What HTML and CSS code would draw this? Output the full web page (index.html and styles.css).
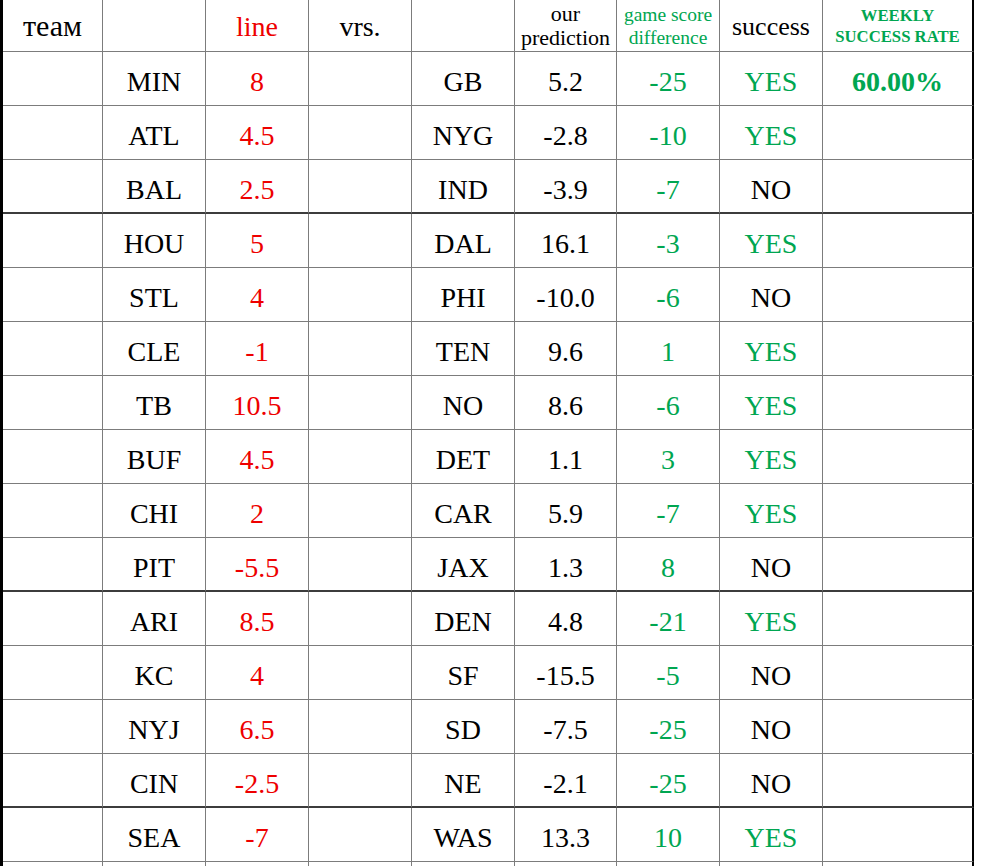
FILE: index.html
```html
<!DOCTYPE html>
<html>
<head>
<meta charset="utf-8">
<link rel="stylesheet" href="styles.css">
</head>
<body>
<div class="sheet">
  <div class="row head">
    <div class="c h-team">теам</div>
    <div class="c"></div>
    <div class="c h-line red">line</div>
    <div class="c h-vrs">vrs.</div>
    <div class="c"></div>
    <div class="c h-pred">our<br>prediction</div>
    <div class="c h-diff green">game score<br>difference</div>
    <div class="c h-succ">success</div>
    <div class="c h-rate green">WEEKLY<br>SUCCESS RATE</div>
  </div>

  <div class="row"><div class="c"></div><div class="c">MIN</div><div class="c red">8</div><div class="c"></div><div class="c">GB</div><div class="c">5.2</div><div class="c green">-25</div><div class="c green">YES</div><div class="c rate green">60.00%</div></div>
  <div class="row"><div class="c"></div><div class="c">ATL</div><div class="c red">4.5</div><div class="c"></div><div class="c">NYG</div><div class="c">-2.8</div><div class="c green">-10</div><div class="c green">YES</div><div class="c"></div></div>
  <div class="row end"><div class="c"></div><div class="c">BAL</div><div class="c red">2.5</div><div class="c"></div><div class="c">IND</div><div class="c">-3.9</div><div class="c green">-7</div><div class="c">NO</div><div class="c"></div></div>

  <div class="row"><div class="c"></div><div class="c">HOU</div><div class="c red">5</div><div class="c"></div><div class="c">DAL</div><div class="c">16.1</div><div class="c green">-3</div><div class="c green">YES</div><div class="c"></div></div>
  <div class="row"><div class="c"></div><div class="c">STL</div><div class="c red">4</div><div class="c"></div><div class="c">PHI</div><div class="c">-10.0</div><div class="c green">-6</div><div class="c">NO</div><div class="c"></div></div>
  <div class="row"><div class="c"></div><div class="c">CLE</div><div class="c red">-1</div><div class="c"></div><div class="c">TEN</div><div class="c">9.6</div><div class="c green">1</div><div class="c green">YES</div><div class="c"></div></div>
  <div class="row"><div class="c"></div><div class="c">TB</div><div class="c red">10.5</div><div class="c"></div><div class="c">NO</div><div class="c">8.6</div><div class="c green">-6</div><div class="c green">YES</div><div class="c"></div></div>
  <div class="row"><div class="c"></div><div class="c">BUF</div><div class="c red">4.5</div><div class="c"></div><div class="c">DET</div><div class="c">1.1</div><div class="c green">3</div><div class="c green">YES</div><div class="c"></div></div>
  <div class="row"><div class="c"></div><div class="c">CHI</div><div class="c red">2</div><div class="c"></div><div class="c">CAR</div><div class="c">5.9</div><div class="c green">-7</div><div class="c green">YES</div><div class="c"></div></div>
  <div class="row end"><div class="c"></div><div class="c">PIT</div><div class="c red">-5.5</div><div class="c"></div><div class="c">JAX</div><div class="c">1.3</div><div class="c green">8</div><div class="c">NO</div><div class="c"></div></div>

  <div class="row"><div class="c"></div><div class="c">ARI</div><div class="c red">8.5</div><div class="c"></div><div class="c">DEN</div><div class="c">4.8</div><div class="c green">-21</div><div class="c green">YES</div><div class="c"></div></div>
  <div class="row"><div class="c"></div><div class="c">KC</div><div class="c red">4</div><div class="c"></div><div class="c">SF</div><div class="c">-15.5</div><div class="c green">-5</div><div class="c">NO</div><div class="c"></div></div>
  <div class="row"><div class="c"></div><div class="c">NYJ</div><div class="c red">6.5</div><div class="c"></div><div class="c">SD</div><div class="c">-7.5</div><div class="c green">-25</div><div class="c">NO</div><div class="c"></div></div>
  <div class="row end"><div class="c"></div><div class="c">CIN</div><div class="c red">-2.5</div><div class="c"></div><div class="c">NE</div><div class="c">-2.1</div><div class="c green">-25</div><div class="c">NO</div><div class="c"></div></div>

  <div class="row"><div class="c"></div><div class="c">SEA</div><div class="c red">-7</div><div class="c"></div><div class="c">WAS</div><div class="c">13.3</div><div class="c green">10</div><div class="c green">YES</div><div class="c"></div></div>
  <div class="row stub"><div class="c"></div><div class="c"></div><div class="c"></div><div class="c"></div><div class="c"></div><div class="c"></div><div class="c"></div><div class="c"></div><div class="c"></div></div>
</div>
</body>
</html>
```

FILE: styles.css
```css
html, body {
  margin: 0;
  padding: 0;
  background: #fff;
}

.sheet {
  width: 974px;
  border-left: 3px solid #000;
  font-family: "Liberation Serif", "Times New Roman", serif;
  color: #000;
}

.row {
  display: grid;
  grid-template-columns: 100px 103px 103px 103px 103px 102px 103px 103px 151px;
  height: 54px;
}

.row.head {
  height: 52px;
}

.row.stub {
  height: 4px;
}

.row.stub .c {
  border-bottom: none;
  padding: 0;
}

.c {
  box-sizing: border-box;
  border-right: 1px solid #7c7c7c;
  border-bottom: 1px solid #7c7c7c;
  display: flex;
  align-items: center;
  justify-content: center;
  text-align: center;
  font-size: 28px;
  padding-top: 7px;
  white-space: nowrap;
}

.c:last-child {
  border-right: 2px solid #000;
}

.row.end .c {
  border-bottom: 2px solid #3c3c3c;
}

.head .c {
  padding-top: 0;
}

.head .h-team {
  font-size: 30px;
}

.head .h-line,
.head .h-vrs {
  padding-top: 2px;
}

.head .h-pred {
  font-size: 22px;
  line-height: 24px;
}

.head .h-diff {
  font-size: 19.5px;
  line-height: 23px;
}

.head .h-succ {
  font-size: 26px;
  padding-top: 3px;
}

.head .h-rate {
  font-size: 16.7px;
  line-height: 21px;
  font-weight: bold;
  padding-top: 1px;
}

.rate {
  font-weight: bold;
}

.red {
  color: #ee0000;
}

.green {
  color: #00a651;
}
```
